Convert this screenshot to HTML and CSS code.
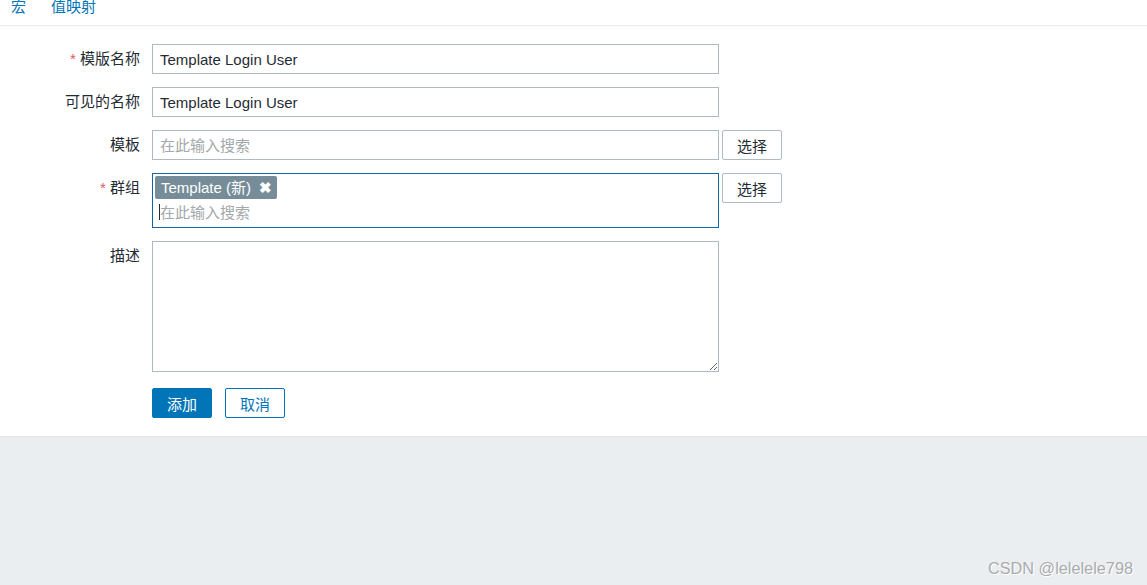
FILE: index.html
```html
<!DOCTYPE html>
<html lang="zh-CN">
<head>
  <meta charset="UTF-8">
  <title>模板</title>
  <link rel="stylesheet" href="styles.css">
</head>
<body>
  <div class="page">
    <div class="tabs">
      <a class="tab" href="#">宏</a>
      <a class="tab" href="#">值映射</a>
    </div>

    <form class="form">
      <div class="row">
        <label class="label"><span class="req">*</span> 模版名称</label>
        <input class="input" type="text" value="Template Login User">
      </div>
      <div class="row">
        <label class="label">可见的名称</label>
        <input class="input" type="text" value="Template Login User">
      </div>
      <div class="row">
        <label class="label">模板</label>
        <input class="input" type="text" placeholder="在此输入搜索">
        <button class="btn-select" type="button">选择</button>
      </div>
      <div class="row">
        <label class="label"><span class="req">*</span> 群组</label>
        <div class="multiselect">
          <div class="tags">
            <span class="tag">Template (新) <span class="tag-remove">✖</span></span>
          </div>
          <div class="search"><span class="caret"></span>在此输入搜索</div>
        </div>
        <button class="btn-select" type="button">选择</button>
      </div>
      <div class="row">
        <label class="label">描述</label>
        <textarea class="textarea"></textarea>
      </div>
      <div class="row actions">
        <button class="btn-primary" type="button">添加</button>
        <button class="btn-alt" type="button">取消</button>
      </div>
    </form>
  </div>

  <div class="watermark">CSDN @lelelele798</div>
</body>
</html>
```

FILE: styles.css
```css
body {
  margin: 0;
  font-family: "Liberation Sans", "Noto Sans CJK SC", sans-serif;
  font-size: 15px;
  color: #1f2c33;
  background: #ebeef0;
  height: 585px;
  overflow: hidden;
  position: relative;
}

.page {
  background: #fff;
  border-bottom: 1px solid #dfe4e7;
  padding-bottom: 18px;
}

.tabs {
  display: flex;
  gap: 25px;
  height: 25px;
  padding-left: 11px;
  border-bottom: 1px solid #ebebeb;
  line-height: 14px;
}

.tab {
  color: #0275b8;
  text-decoration: none;
}

.form {
  display: flex;
  flex-direction: column;
  gap: 13px;
  padding-top: 18px;
}

.row {
  display: flex;
  align-items: flex-start;
}

.label {
  width: 140px;
  margin-right: 12px;
  text-align: right;
  line-height: 30px;
}

.req {
  color: #e45959;
}

.input {
  box-sizing: border-box;
  width: 567px;
  height: 30px;
  padding: 0 7px;
  border: 1px solid #acbbc2;
  font: inherit;
  color: #1f2c33;
  outline: none;
}

.input::placeholder {
  color: #a3a8ab;
}

.btn-select {
  box-sizing: border-box;
  margin-left: 3px;
  width: 60px;
  height: 30px;
  background: #fff;
  border: 1px solid #acbbc2;
  border-radius: 2px;
  font: inherit;
  color: #1f2c33;
}

.multiselect {
  box-sizing: border-box;
  width: 567px;
  height: 55px;
  border: 1px solid #0f67a5;
  padding: 2px;
}

.tag {
  display: inline-block;
  height: 23px;
  line-height: 23px;
  padding: 0 5px 0 6px;
  background: #768d99;
  color: #fff;
  border-radius: 2px;
}

.tag-remove {
  font-size: 15px;
  font-weight: bold;
  margin-left: 4px;
}

.search {
  display: flex;
  align-items: center;
  height: 25px;
  padding-left: 4px;
  color: #a3a8ab;
}

.caret {
  width: 1px;
  height: 16px;
  background: #1f2c33;
}

.textarea {
  box-sizing: border-box;
  width: 567px;
  height: 131px;
  border: 1px solid #acbbc2;
  font: inherit;
  margin: 0;
}

.actions {
  margin-top: 3px;
  padding-left: 152px;
  gap: 13px;
}

.btn-primary,
.btn-alt {
  box-sizing: border-box;
  width: 60px;
  height: 30px;
  border-radius: 2px;
  font: inherit;
}

.btn-primary {
  background: #0275b8;
  border: 1px solid #0275b8;
  color: #fff;
}

.btn-alt {
  background: #fff;
  border: 1px solid #0275b8;
  color: #0275b8;
}

.watermark {
  position: absolute;
  right: 14px;
  bottom: 7px;
  font-size: 16.3px;
  color: #a9acae;
  text-shadow: 1px 1px 0 #fff;
}
```
